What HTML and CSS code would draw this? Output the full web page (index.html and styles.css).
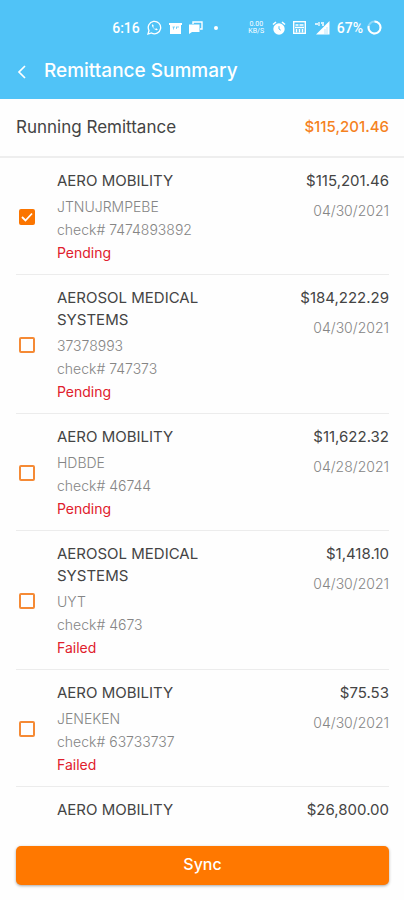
FILE: index.html
```
<!DOCTYPE html>
<html lang="en">
<head>
    <meta charset="UTF-8">
    <meta name="viewport" content="width=device-width, initial-scale=1.0">
    <title>Remittance Summary</title>
    <link rel="stylesheet" href="styles.css">
</head>
<body>
    <div class="screen">
        <header class="header">
            <div class="status">
                <span class="time">6:16</span>
                <div class="status-left">
                    <svg width="15" height="15" viewBox="0 0 15 15" fill="none" stroke="#fff">
                        <path d="M1 14l1-3.500a6.200 6.200 0 1 1 2.500 2.500z" stroke-width="1.300"/>
                        <path d="M5 4.500c-.7 2 3 6 5 5.700l.8-1-1.700-1-.9.700c-1-.3-1.700-1.200-2-2l.6-.8-.8-1.600z" fill="#fff" stroke="none"/>
                    </svg>
                    <svg width="13" height="12" viewBox="0 0 13 12">
                        <path d="M0 1h13v2h-1v9H1V3H0z" fill="#fff"/>
                        <path d="M3.500 5h2.500M7 5h3M4.500 5v2.500M7.500 5v2" stroke="#50c3f7" stroke-width=".7" fill="none"/>
                    </svg>
                    <svg width="14" height="13" viewBox="0 0 14 13">
                        <path d="M4 3V1h9v7h-2" fill="none" stroke="#fff" stroke-width="1.400"/>
                        <path d="M0 3.500h10.500V11H3l-3 2z" fill="#fff"/>
                    </svg>
                    <i class="dot"></i>
                </div>
                <div class="status-right">
                    <span class="speed">0.00<br>KB/S</span>
                    <svg width="14" height="14" viewBox="0 0 14 14">
                        <circle cx="7" cy="8" r="5.700" fill="#fff"/>
                        <path d="M1 3.500L4 1M13 3.500L10 1" stroke="#fff" stroke-width="1.600"/>
                        <path d="M7 5.200V8l1.800 1.200" stroke="#50c3f7" fill="none"/>
                    </svg>
                    <svg width="13" height="13" viewBox="0 0 13 13">
                        <rect x=".7" y=".7" width="11.600" height="11.600" fill="none" stroke="#fff" stroke-width="1.400"/>
                        <path d="M2.500 4h3M6.500 4h4M2 6.500h9M3.500 8v3.500M6.500 8v3.500M9.500 8v3.500" stroke="#fff" stroke-width="1.500"/>
                    </svg>
                    <svg width="17" height="14" viewBox="0 0 17 14">
                        <path d="M16.500 0v13.500H3z" fill="#fff"/>
                        <path d="M2 3h3M6 1v4M8 2h3M9 4h2" stroke="#fff" stroke-width="1.300"/>
                        <path d="M12 8v5M14 6v7" stroke="#50c3f7" stroke-width=".4"/>
                    </svg>
                </div>
                <span class="battery">67%</span>
                <svg width="15" height="15" viewBox="0 0 15 15" fill="none" stroke="#fff" stroke-width="2">
                    <circle cx="7.500" cy="7.500" r="6" stroke-opacity=".35"/>
                    <path d="M7.500 1.500a6 6 0 1 1-5.800 4.500"/>
                </svg>
            </div>
            <div class="nav">
                <button class="back" type="button" aria-label="Back">
                    <svg width="10" height="14" viewBox="0 0 10 14" fill="none" stroke="#fff" stroke-width="1.700">
                        <path d="M9 1L3 7l6 6"/>
                    </svg>
                </button>
                <h1>Remittance Summary</h1>
            </div>
        </header>

        <div class="total">
            <span>Running Remittance</span>
            <span class="total-amount">$115,201.46</span>
        </div>

        <ul class="list">
            <li class="item">
                <input type="checkbox" id="r1" checked>
                <label class="info" for="r1">
                    <span class="name">AERO MOBILITY</span>
                    <span>JTNUJRMPEBE</span>
                    <span>check# 7474893892</span>
                    <span class="state">Pending</span>
                </label>
                <div class="side">
                    <span class="amount">$115,201.46</span>
                    <span>04/30/2021</span>
                </div>
            </li>
            <li class="item">
                <input type="checkbox" id="r2">
                <label class="info" for="r2">
                    <span class="name">AEROSOL MEDICAL SYSTEMS</span>
                    <span>37378993</span>
                    <span>check# 747373</span>
                    <span class="state">Pending</span>
                </label>
                <div class="side">
                    <span class="amount">$184,222.29</span>
                    <span>04/30/2021</span>
                </div>
            </li>
            <li class="item">
                <input type="checkbox" id="r3">
                <label class="info" for="r3">
                    <span class="name">AERO MOBILITY</span>
                    <span>HDBDE</span>
                    <span>check# 46744</span>
                    <span class="state">Pending</span>
                </label>
                <div class="side">
                    <span class="amount">$11,622.32</span>
                    <span>04/28/2021</span>
                </div>
            </li>
            <li class="item">
                <input type="checkbox" id="r4">
                <label class="info" for="r4">
                    <span class="name">AEROSOL MEDICAL SYSTEMS</span>
                    <span>UYT</span>
                    <span>check# 4673</span>
                    <span class="state">Failed</span>
                </label>
                <div class="side">
                    <span class="amount">$1,418.10</span>
                    <span>04/30/2021</span>
                </div>
            </li>
            <li class="item">
                <input type="checkbox" id="r5">
                <label class="info" for="r5">
                    <span class="name">AERO MOBILITY</span>
                    <span>JENEKEN</span>
                    <span>check# 63733737</span>
                    <span class="state">Failed</span>
                </label>
                <div class="side">
                    <span class="amount">$75.53</span>
                    <span>04/30/2021</span>
                </div>
            </li>
            <li class="item item-last">
                <div class="info">
                    <span class="name">AERO MOBILITY</span>
                </div>
                <div class="side">
                    <span class="amount">$26,800.00</span>
                </div>
            </li>
        </ul>

        <footer class="footer">
            <button class="sync" type="button">Sync</button>
        </footer>
    </div>
</body>
</html>
```
FILE: styles.css
```
*{
    margin: 0;
    padding: 0;
    box-sizing: border-box;
}
body{
    background-color: #fefefe;
    color: #444;
    font-family: Inter, "Open Sans", sans-serif;
    font-size: 15px;
}
button{
    border: none;
    font-family: inherit;
    cursor: pointer;
}
.screen{
    display: flex;
    flex-direction: column;
    height: 100vh;
}

/* header */
.header{
    padding: 17px 22px 16px 16px;
    background-color: #50c3f7;
    color: #fff;
}
.status{
    display: flex;
    align-items: center;
    justify-content: flex-end;
    height: 21px;
    font-family: Roboto, sans-serif;
    font-size: 14px;
    font-weight: 500;
}
.status-left,.status-right{
    display: flex;
    align-items: center;
    gap: 7px;
}
.status-left{
    margin: 0 30px 0 7px;
}
.status-right{
    margin-right: 7px;
}
.dot{
    width: 4px;
    height: 4px;
    margin-left: 4px;
    border-radius: 50%;
    background-color: #fff;
}
.speed{
    width: 17px;
    font-size: 7px;
    line-height: 7px;
    font-weight: 400;
    text-align: center;
}
.battery{
    margin-right: 4px;
}
.nav{
    display: flex;
    align-items: center;
    margin-top: 20px;
}
.back{
    display: flex;
    width: 28px;
    padding-top: 3px;
    background: none;
}
.nav h1{
    font-size: 19px;
    line-height: 25px;
    font-weight: 500;
}

/* running total */
.total{
    display: flex;
    justify-content: space-between;
    padding: 17px 15px 18px 16px;
    border-bottom: 2px solid #eee;
    font-size: 17px;
    line-height: 22px;
}
.total-amount{
    font-size: 15px;
    font-weight: 500;
    color: #f5821f;
}

/* remittance rows */
.list{
    flex: 1;
    min-height: 0;
    margin: 0 15px 0 16px;
    overflow: hidden;
    list-style: none;
}
.item{
    display: flex;
    align-items: center;
    padding: 12px 0 10px;
    border-bottom: 1px solid #ececec;
}
.item input{
    flex: none;
    width: 16px;
    height: 16px;
    margin: 0 22px 0 3px;
    border: 2px solid #f58a35;
    border-radius: 2px;
    appearance: none;
}
.item input:checked{
    border-color: #fb7500;
    background: #fb7500 url("data:image/svg+xml,%3Csvg xmlns='http://www.w3.org/2000/svg' viewBox='0 0 12 12'%3E%3Cpath d='M1 6l3.500 3.500L11 2.500' fill='none' stroke='white' stroke-width='1.800'/%3E%3C/svg%3E") center / 12px no-repeat;
}
.info,.side{
    display: flex;
    flex-direction: column;
    font-size: 14px;
    line-height: 23px;
    font-weight: 300;
    color: #858585;
}
.info{
    flex: 1;
}
.side{
    align-self: flex-start;
    align-items: flex-end;
}
.name,.amount{
    font-size: 15px;
    line-height: 22px;
    font-weight: 400;
    color: #444;
}
.name{
    max-width: 160px;
    margin-bottom: 3px;
}
.amount{
    margin-bottom: 7px;
}
.state{
    font-weight: 400;
    color: #e0202c;
}
.item-last{
    align-items: flex-start;
    padding-left: 41px;
    border-bottom: none;
}

/* bottom button */
.footer{
    padding: 12px 15px 15px 16px;
}
.sync{
    display: block;
    width: 100%;
    height: 39px;
    padding-bottom: 3px;
    border-radius: 5px;
    background-color: #ff7800;
    box-shadow: 0 1px 3px rgba(0, 0, 0, .35);
    color: #fff;
    font-size: 16px;
    font-weight: 500;
}
```
